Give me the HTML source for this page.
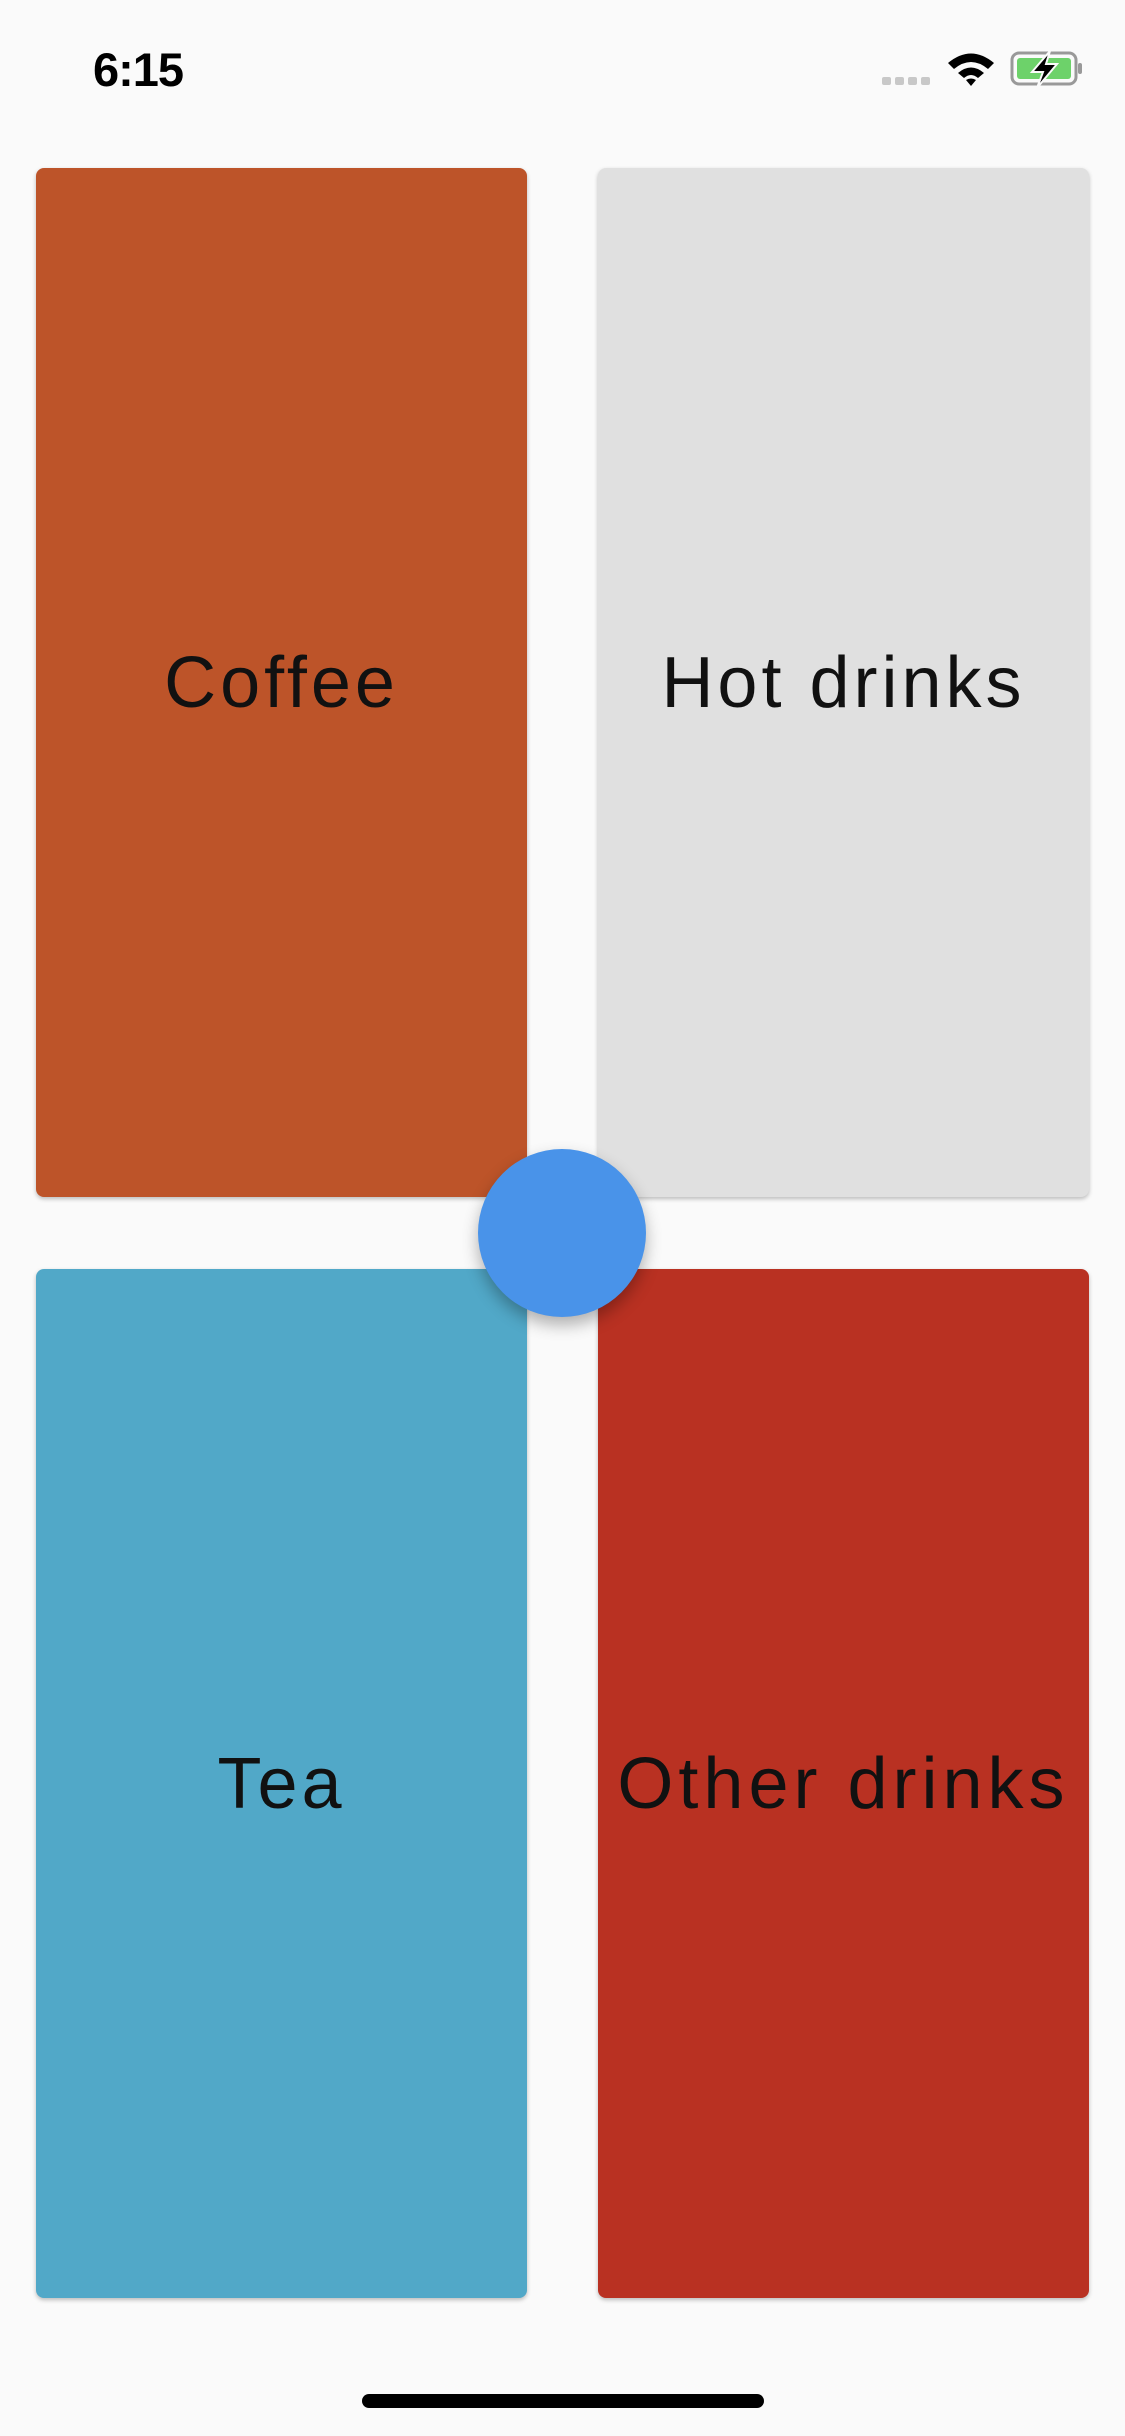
<!DOCTYPE html>
<html><head><style>
body{margin:0;width:1125px;height:2436px;background:#fafafa;position:relative;overflow:hidden;font-family:"Liberation Sans",sans-serif}
.card{position:absolute;width:491px;height:1029px;border-radius:8px;box-shadow:0 2px 4px rgba(0,0,0,.25);display:flex;align-items:center;justify-content:center;font-size:72px;letter-spacing:4px;color:#111}
.time{position:absolute;left:93px;top:42px;font-size:47px;font-weight:bold;letter-spacing:-1px}
</style></head><body>
<div class="time">6:15</div>
<svg style="position:absolute;left:880px;top:50px" width="220" height="40" viewBox="0 0 220 40">
<rect x="2" y="27" width="9" height="8" rx="2" fill="#c8c8c8"/>
<rect x="15" y="27" width="9" height="8" rx="2" fill="#c8c8c8"/>
<rect x="28" y="27" width="9" height="8" rx="2" fill="#c8c8c8"/>
<rect x="41" y="27" width="9" height="8" rx="2" fill="#c8c8c8"/>
<path d="M68 13 Q91 -6 114 13 L108 19 Q91 5 74 19Z" fill="#000"/>
<path d="M78 23 Q91 12 104 23 L98 28 Q91 22 84 28Z" fill="#000"/>
<path d="M86 30 Q91 27 96 30 L91 36Z" fill="#000"/>
<rect x="132" y="3" width="64" height="31" rx="7" fill="none" stroke="#999" stroke-width="3"/>
<rect x="137" y="8" width="54" height="21" rx="3" fill="#6dd26a"/>
<rect x="198" y="13" width="4" height="11" rx="2" fill="#999"/>
<path d="M170 1 L152 22 L163 22 L157 38 L177 14 L166 14Z" fill="#000" stroke="#fafafa" stroke-width="2"/>
</svg>
<div class="card" style="left:36px;top:168px;background:#bd5429">Coffee</div>
<div class="card" style="left:598px;top:168px;background:#e0e0e0">Hot drinks</div>
<div class="card" style="left:36px;top:1269px;background:#51a8c8">Tea</div>
<div class="card" style="left:598px;top:1269px;background:#b93122;letter-spacing:5px">Other drinks</div>
<div style="position:absolute;left:478px;top:1149px;width:168px;height:168px;border-radius:50%;background:#4993e9;box-shadow:0 8px 16px rgba(0,0,0,.3)"></div>
<div style="position:absolute;left:362px;top:2394px;width:402px;height:14px;border-radius:7px;background:#000"></div>
</body></html>
